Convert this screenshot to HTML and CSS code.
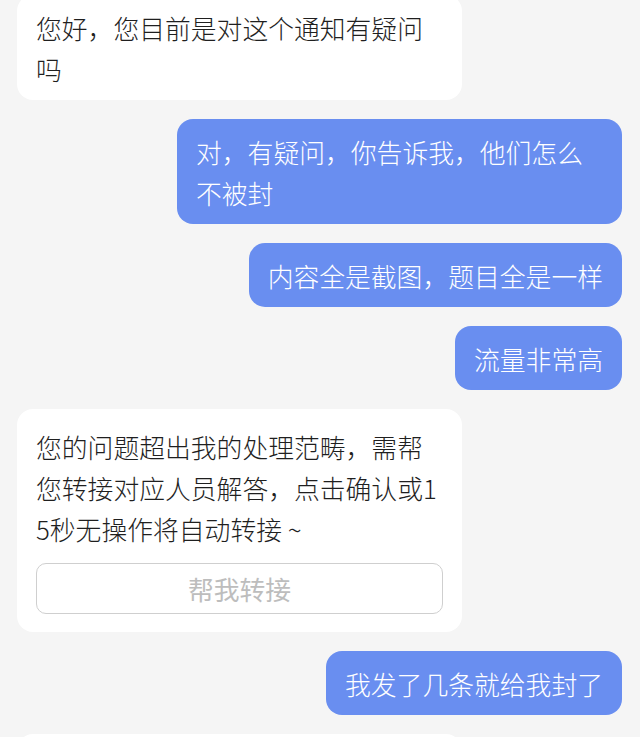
FILE: index.html
```html
<!DOCTYPE html>
<html lang="zh-CN">
<head>
  <meta charset="UTF-8" />
  <meta name="viewport" content="width=device-width, initial-scale=1.0" />
  <title>在线客服</title>
  <link rel="stylesheet" href="styles.css">
</head>
<body>

  <div class="chat">
    <div class="bubble left">您好，您目前是对这个通知有疑问吗</div>

    <div class="bubble right">对，有疑问，你告诉我，他们怎么不被封</div>
    <div class="bubble right">内容全是截图，题目全是一样</div>
    <div class="bubble right">流量非常高</div>

    <div class="bubble left card">
      <p>您的问题超出我的处理范畴，需帮您转接对应人员解答，点击确认或15秒无操作将自动转接 ~</p>
      <button class="transfer-btn" disabled>帮我转接</button>
    </div>

    <div class="bubble right">我发了几条就给我封了</div>

    <div class="bubble left next"></div>
  </div>

</body>
</html>
```

FILE: styles.css
```css
body {
  margin: 0;
  background: #f5f5f5;
  font-family: "Noto Sans CJK SC", "Noto Sans", sans-serif;
  overflow: hidden;
}

.chat {
  display: flex;
  flex-direction: column;
  gap: 19px;
  padding: 0 18px 0 17px;
  margin-top: -5px;
}

.bubble {
  max-width: 445px;
  box-sizing: border-box;
  padding: 12px 19px 11px;
  border-radius: 16px;
  font-size: 25.8px;
  font-weight: 300;
  line-height: 41px;
  word-break: break-all;
}

.left {
  align-self: flex-start;
  background: #fff;
  color: #1f1f1f;
}

.right {
  align-self: flex-end;
  background: #698ef0;
  color: #fff;
}

.card {
  padding: 17px 19px 18px;
}

.card p {
  margin: 0;
}

.transfer-btn {
  display: block;
  width: 100%;
  height: 51px;
  margin-top: 14px;
  background: #fff;
  border: 1.5px solid #cfcfcf;
  border-radius: 10px;
  font-family: inherit;
  font-size: 25.8px;
  font-weight: 400;
  color: #bdbdbd;
}

.next {
  width: 445px;
  height: 60px;
}
```
